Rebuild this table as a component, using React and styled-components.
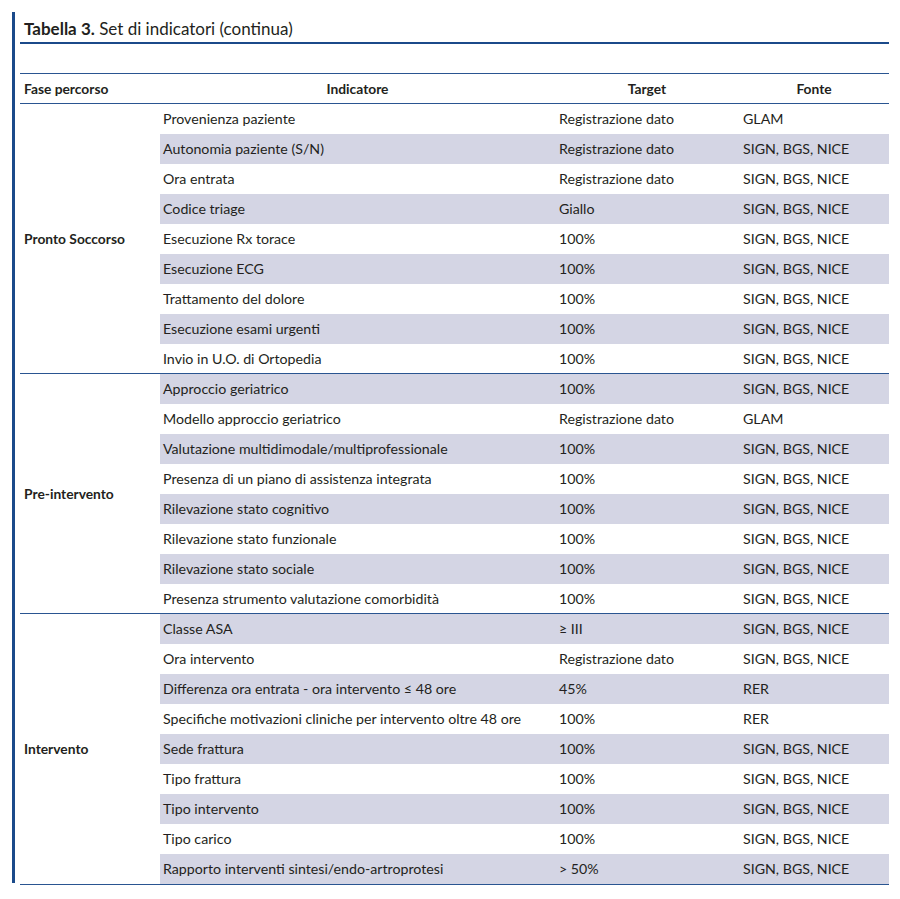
import React from 'react'
import styled, { createGlobalStyle } from 'styled-components'

const GlobalStyle = createGlobalStyle`
 body {
  margin: 0;
  background: #fff;
  font-family: Lato, "Liberation Sans", sans-serif;
  color: #231f20;
 }
`

const Page = styled.div`
 width: 900px;
 height: 899px;
 box-sizing: border-box;
 padding: 12px 0 0 12px;
`

const Frame = styled.div`
 width: 869px;
 border-left: 3px solid #1b4a8a;
 padding-left: 5px;
 height: 871px;
`

const Title = styled.h1`
 margin: 0;
 padding: 8px 0 4px 4px;
 font-size: 17px;
 font-weight: 400;
 line-height: 18px;
 border-bottom: 2px solid #1b4a8a;
`

const TitleBold = styled.span`
 font-weight: 700;
`

const Table = styled.table`
 margin-top: 29px;
 width: 869px;
 border-collapse: collapse;
 font-size: 14.2px;
 table-layout: fixed;
`

const HeadCell = styled.th`
 height: 29px;
 padding: 0 4px;
 font-weight: 700;
 font-size: 13.8px;
 text-align: ${(p) => (p.$left ? 'left' : 'center')};
 border-top: 1.5px solid #2a5591;
 border-bottom: 1.5px solid #2a5591;
`

const Row = styled.tr`
 height: 30px;
 border-top: ${(p) => (p.$first ? '1.5px solid #2a5591' : 'none')};
`

const PhaseCell = styled.td`
 padding: 0 4px;
 font-weight: 700;
 font-size: 13.8px;
 vertical-align: middle;
 background: #fff;
`

const Cell = styled.td`
 padding: 0 3px 0 ${(p) => p.$pad || 3}px;
 background: ${(p) => (p.$shade ? '#d4d5e4' : '#fff')};
 white-space: nowrap;
`

const Wrap = styled.div`
 border-bottom: 1.5px solid #2a5591;
`

const groups = [
 {
  phase: 'Pronto Soccorso',
  rows: [
   ['Provenienza paziente', 'Registrazione dato', 'GLAM'],
   ['Autonomia paziente (S/N)', 'Registrazione dato', 'SIGN, BGS, NICE'],
   ['Ora entrata', 'Registrazione dato', 'SIGN, BGS, NICE'],
   ['Codice triage', 'Giallo', 'SIGN, BGS, NICE'],
   ['Esecuzione Rx torace', '100%', 'SIGN, BGS, NICE'],
   ['Esecuzione ECG', '100%', 'SIGN, BGS, NICE'],
   ['Trattamento del dolore', '100%', 'SIGN, BGS, NICE'],
   ['Esecuzione esami urgenti', '100%', 'SIGN, BGS, NICE'],
   ['Invio in U.O. di Ortopedia', '100%', 'SIGN, BGS, NICE'],
  ],
 },
 {
  phase: 'Pre-intervento',
  rows: [
   ['Approccio geriatrico', '100%', 'SIGN, BGS, NICE'],
   ['Modello approccio geriatrico', 'Registrazione dato', 'GLAM'],
   ['Valutazione multidimodale/multiprofessionale', '100%', 'SIGN, BGS, NICE'],
   ['Presenza di un piano di assistenza integrata', '100%', 'SIGN, BGS, NICE'],
   ['Rilevazione stato cognitivo', '100%', 'SIGN, BGS, NICE'],
   ['Rilevazione stato funzionale', '100%', 'SIGN, BGS, NICE'],
   ['Rilevazione stato sociale', '100%', 'SIGN, BGS, NICE'],
   ['Presenza strumento valutazione comorbidità', '100%', 'SIGN, BGS, NICE'],
  ],
 },
 {
  phase: 'Intervento',
  rows: [
   ['Classe ASA', '≥ III', 'SIGN, BGS, NICE'],
   ['Ora intervento', 'Registrazione dato', 'SIGN, BGS, NICE'],
   ['Differenza ora entrata - ora intervento ≤ 48 ore', '45%', 'RER'],
   ['Specifiche motivazioni cliniche per intervento oltre 48 ore', '100%', 'RER'],
   ['Sede frattura', '100%', 'SIGN, BGS, NICE'],
   ['Tipo frattura', '100%', 'SIGN, BGS, NICE'],
   ['Tipo intervento', '100%', 'SIGN, BGS, NICE'],
   ['Tipo carico', '100%', 'SIGN, BGS, NICE'],
   ['Rapporto interventi sintesi/endo-artroprotesi', '> 50%', 'SIGN, BGS, NICE'],
  ],
 },
]

const App = () => {
 let index = 0
 return (
  <Page>
   <GlobalStyle />
   <Frame>
    <Title>
     <TitleBold>Tabella 3.</TitleBold> Set di indicatori (continua)
    </Title>
    <Wrap>
     <Table>
      <colgroup>
       <col style={{ width: 140 }} />
       <col style={{ width: 395 }} />
       <col style={{ width: 184 }} />
       <col style={{ width: 150 }} />
      </colgroup>
      <thead>
       <tr>
        <HeadCell $left>Fase percorso</HeadCell>
        <HeadCell>Indicatore</HeadCell>
        <HeadCell>Target</HeadCell>
        <HeadCell>Fonte</HeadCell>
       </tr>
      </thead>
      <tbody>
       {groups.map((g, gi) =>
        g.rows.map((r, ri) => {
         const shade = index++ % 2 === 1
         return (
          <Row key={`${gi}-${ri}`} $first={ri === 0 && gi > 0}>
           {ri === 0 && <PhaseCell rowSpan={g.rows.length}>{g.phase}</PhaseCell>}
           <Cell $shade={shade}>{r[0]}</Cell>
           <Cell $shade={shade} $pad={4}>{r[1]}</Cell>
           <Cell $shade={shade} $pad={4}>{r[2]}</Cell>
          </Row>
         )
        })
       )}
      </tbody>
     </Table>
    </Wrap>
   </Frame>
  </Page>
 )
}

export default App
